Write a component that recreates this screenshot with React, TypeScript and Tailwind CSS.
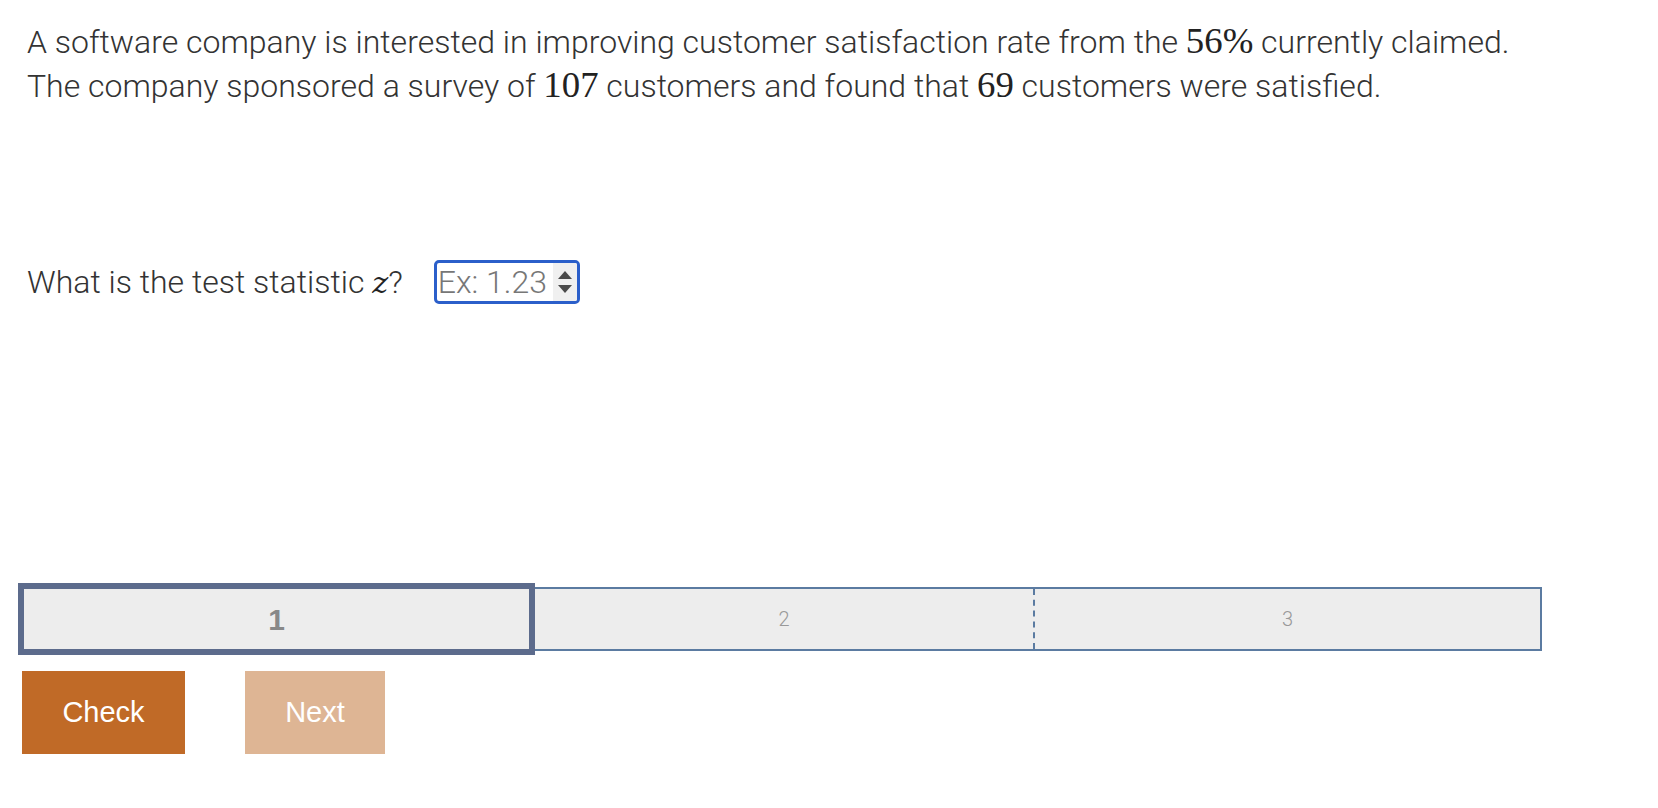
import { useState } from 'react';

const M = ({ children }: { children: React.ReactNode }) => (
  <span className="font-['Liberation_Serif',serif] text-[1.15em] font-normal leading-none text-[#222]">
    {children}
  </span>
);

const App = () => {
  const [answer, setAnswer] = useState('');

  return (
    <main className="min-h-screen bg-white font-['Roboto','Liberation_Sans',sans-serif] text-[#333]">
      <p className="pl-[27px] pt-[20px] text-[32px] font-light leading-[44px]">
        A software company is interested in improving customer satisfaction rate from the <M>56%</M> currently
        claimed.
        <br />
        The company sponsored a survey of <M>107</M> customers and found that <M>69</M> customers were satisfied.
      </p>

      <div className="ml-[27px] mt-[152px] flex h-[44px] items-center text-[32px] font-light">
        <span>
          What is the test statistic{' '}
          <i className="font-['DejaVu_Serif',serif] text-[0.95em] font-normal italic leading-none text-[#222]">z</i>?
        </span>
        <div className="ml-[31px] flex h-[44px] w-[146px] items-stretch overflow-hidden rounded-[5px] border-[3px] border-[#2b5fca] bg-white">
          <input
            className="w-[116px] bg-transparent pl-[1px] text-[32px] font-light text-[#333] outline-none placeholder:text-[#777]"
            placeholder="Ex: 1.23"
            value={answer}
            onChange={(e) => {
              setAnswer(e.target.value);
            }}
          />
          <div className="flex w-[24px] flex-col items-center justify-center gap-[6px] bg-[#f0f0f0]">
            <svg width="14" height="8" viewBox="0 0 14 8">
              <path d="M7 0 L14 8 L0 8 Z" fill="#4a4a4a" />
            </svg>
            <svg width="14" height="8" viewBox="0 0 14 8">
              <path d="M0 0 L14 0 L7 8 Z" fill="#4a4a4a" />
            </svg>
          </div>
        </div>
      </div>

      <div className="ml-[18px] mt-[279px] flex w-[1524px] items-center">
        <div className="flex h-[72px] w-[517px] items-center justify-center border-[6px] border-[#5c6b8c] bg-[#ededed] font-['Liberation_Sans',sans-serif] text-[30px] font-bold text-[#888]">
          1
        </div>
        <div className="flex h-[64px] flex-1 border-2 border-l-0 border-[#5b7ba1] bg-[#ededed] text-[20px] font-light text-[#999]">
          <div className="flex w-[498px] items-center justify-center">2</div>
          <div className="flex flex-1 items-center justify-center border-l-2 border-dashed border-[#5b7ba1]">3</div>
        </div>
      </div>

      <div className="ml-[22px] mt-[16px] flex gap-[60px] font-['Liberation_Sans',sans-serif] text-[29px] text-white">
        <button className="h-[83px] w-[163px] bg-[#c06a27]">Check</button>
        <button className="h-[83px] w-[140px] bg-[#deb594]">Next</button>
      </div>
    </main>
  );
};

export default App;
